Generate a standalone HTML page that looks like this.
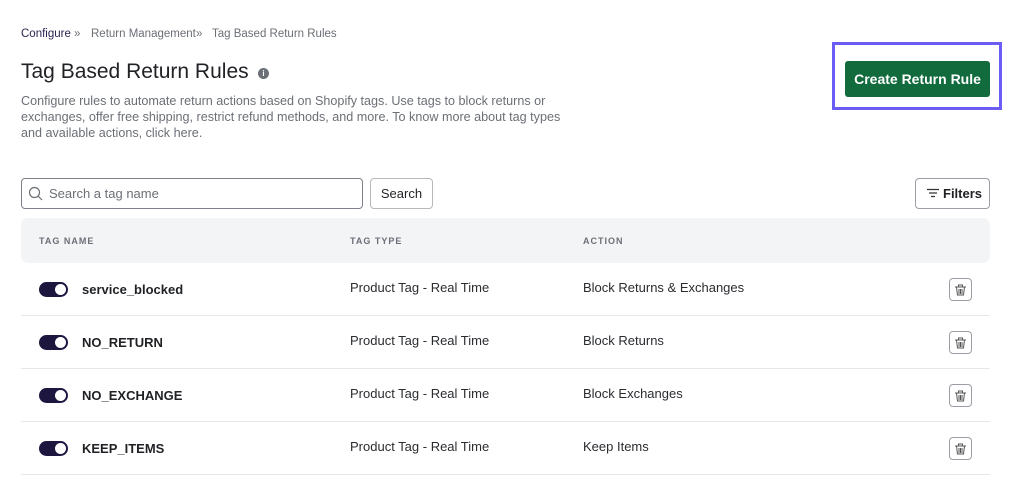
<!DOCTYPE html>
<html><head><style>
*{box-sizing:border-box;margin:0;padding:0}
body{width:1012px;height:482px;overflow:hidden;background:#fff;font-family:"Liberation Sans",sans-serif;position:relative;color:#1f2124}
.a{position:absolute;white-space:nowrap}
.crumb{top:28px;font-size:11.5px;color:#6b6f76}
.row{position:absolute;left:21px;width:969px;height:53px;border-bottom:1px solid #e5e7eb}
.tg{position:absolute;left:18px;top:19px;width:29px;height:15px;border-radius:8px;background:#1d1740}
.tg:after{content:"";position:absolute;right:2px;top:2px;width:11px;height:11px;border-radius:50%;background:#fff}
.nm{position:absolute;left:61px;top:19px;font-size:13px;font-weight:bold;color:#1f2124}
.ty{position:absolute;left:329px;top:17px;font-size:13px;color:#2a2c30}
.ac{position:absolute;left:562px;top:17px;font-size:13px;color:#2a2c30}
.tr{position:absolute;left:928px;top:15px;width:23px;height:23px;border:1px solid #9a9ea5;border-radius:4px;background:#fff}
</style></head><body>
<div class="a crumb" style="left:21px;color:#2b2450">Configure</div>
<div class="a crumb" style="left:74px">»</div>
<div class="a crumb" style="left:91px">Return Management</div>
<div class="a crumb" style="left:196px">»</div>
<div class="a crumb" style="left:212px">Tag Based Return Rules</div>
<div class="a" style="left:21px;top:60px;font-size:21px;color:#202226">Tag Based Return Rules</div>
<div class="a" style="left:258px;top:68px;width:11px;height:11px;border-radius:50%;background:#6b6f76;color:#fff;font-size:8px;font-weight:bold;text-align:center;line-height:11px">i</div>
<div class="a" style="left:21px;top:93px;font-size:12.6px;line-height:16px;color:#6b6f76">Configure rules to automate return actions based on Shopify tags. Use tags to block returns or<br>exchanges, offer free shipping, restrict refund methods, and more. To know more about tag types<br>and available actions, click here.</div>
<div class="a" style="left:832px;top:42px;width:170px;height:68px;border:3px solid #6b5cf6"></div>
<div class="a" style="left:845px;top:61px;width:145px;height:36px;background:#116b3c;border-radius:3px;color:#fff;font-weight:bold;font-size:14px;text-align:center;line-height:36px">Create Return Rule</div>
<div class="a" style="left:21px;top:178px;width:342px;height:31px;border:1px solid #7c8088;border-radius:4px"></div>
<svg class="a" style="left:28px;top:186px" width="15" height="15" viewBox="0 0 15 15"><circle cx="6.5" cy="6.5" r="5" fill="none" stroke="#6b6f76" stroke-width="1.2"/><path d="M10 10l4 4" stroke="#6b6f76" stroke-width="1.2"/></svg>
<div class="a" style="left:49px;top:186px;font-size:13px;color:#6b6f76">Search a tag name</div>
<div class="a" style="left:370px;top:178px;width:63px;height:31px;border:1px solid #b5b8bd;border-radius:4px;font-size:13px;text-align:center;line-height:29px;color:#1f2124">Search</div>
<div class="a" style="left:915px;top:178px;width:75px;height:31px;border:1px solid #9a9ea5;border-radius:4px;font-size:13px;font-weight:bold;line-height:29px;padding-left:27px">Filters</div>
<svg class="a" style="left:927px;top:188px" width="12" height="10"><path d="M0 1.5h12M2 5h8M4 8.5h4" stroke="#333" stroke-width="1.2"/></svg>
<div class="a" style="left:21px;top:218px;width:969px;height:45px;background:#f3f4f6;border-radius:7px"></div>
<div class="a" style="left:39px;top:236px;font-size:9px;font-weight:bold;letter-spacing:1px;color:#6b6f76">TAG NAME</div>
<div class="a" style="left:350px;top:236px;font-size:9px;font-weight:bold;letter-spacing:1px;color:#6b6f76">TAG TYPE</div>
<div class="a" style="left:583px;top:236px;font-size:9px;font-weight:bold;letter-spacing:1px;color:#6b6f76">ACTION</div>
<div class="row" style="top:263px"><div class="tg"></div><div class="nm">service_blocked</div><div class="ty">Product Tag - Real Time</div><div class="ac">Block Returns &amp; Exchanges</div><div class="tr"></div></div>
<div class="row" style="top:316px"><div class="tg"></div><div class="nm">NO_RETURN</div><div class="ty">Product Tag - Real Time</div><div class="ac">Block Returns</div><div class="tr"></div></div>
<div class="row" style="top:369px"><div class="tg"></div><div class="nm">NO_EXCHANGE</div><div class="ty">Product Tag - Real Time</div><div class="ac">Block Exchanges</div><div class="tr"></div></div>
<div class="row" style="top:422px"><div class="tg"></div><div class="nm">KEEP_ITEMS</div><div class="ty">Product Tag - Real Time</div><div class="ac">Keep Items</div><div class="tr"></div></div>
<svg class="a" style="left:954px;top:283px" width="13" height="180">
<g id="t" fill="none" stroke="#555" stroke-width="1"><path d="M1 4h11M4.5 4V2h4v2M2.5 4l1 8h6l1-8M5 6v5M6.5 6v5M8 6v5"/></g>
<use href="#t" y="53"/><use href="#t" y="106"/><use href="#t" y="159"/></svg>
</body></html>
